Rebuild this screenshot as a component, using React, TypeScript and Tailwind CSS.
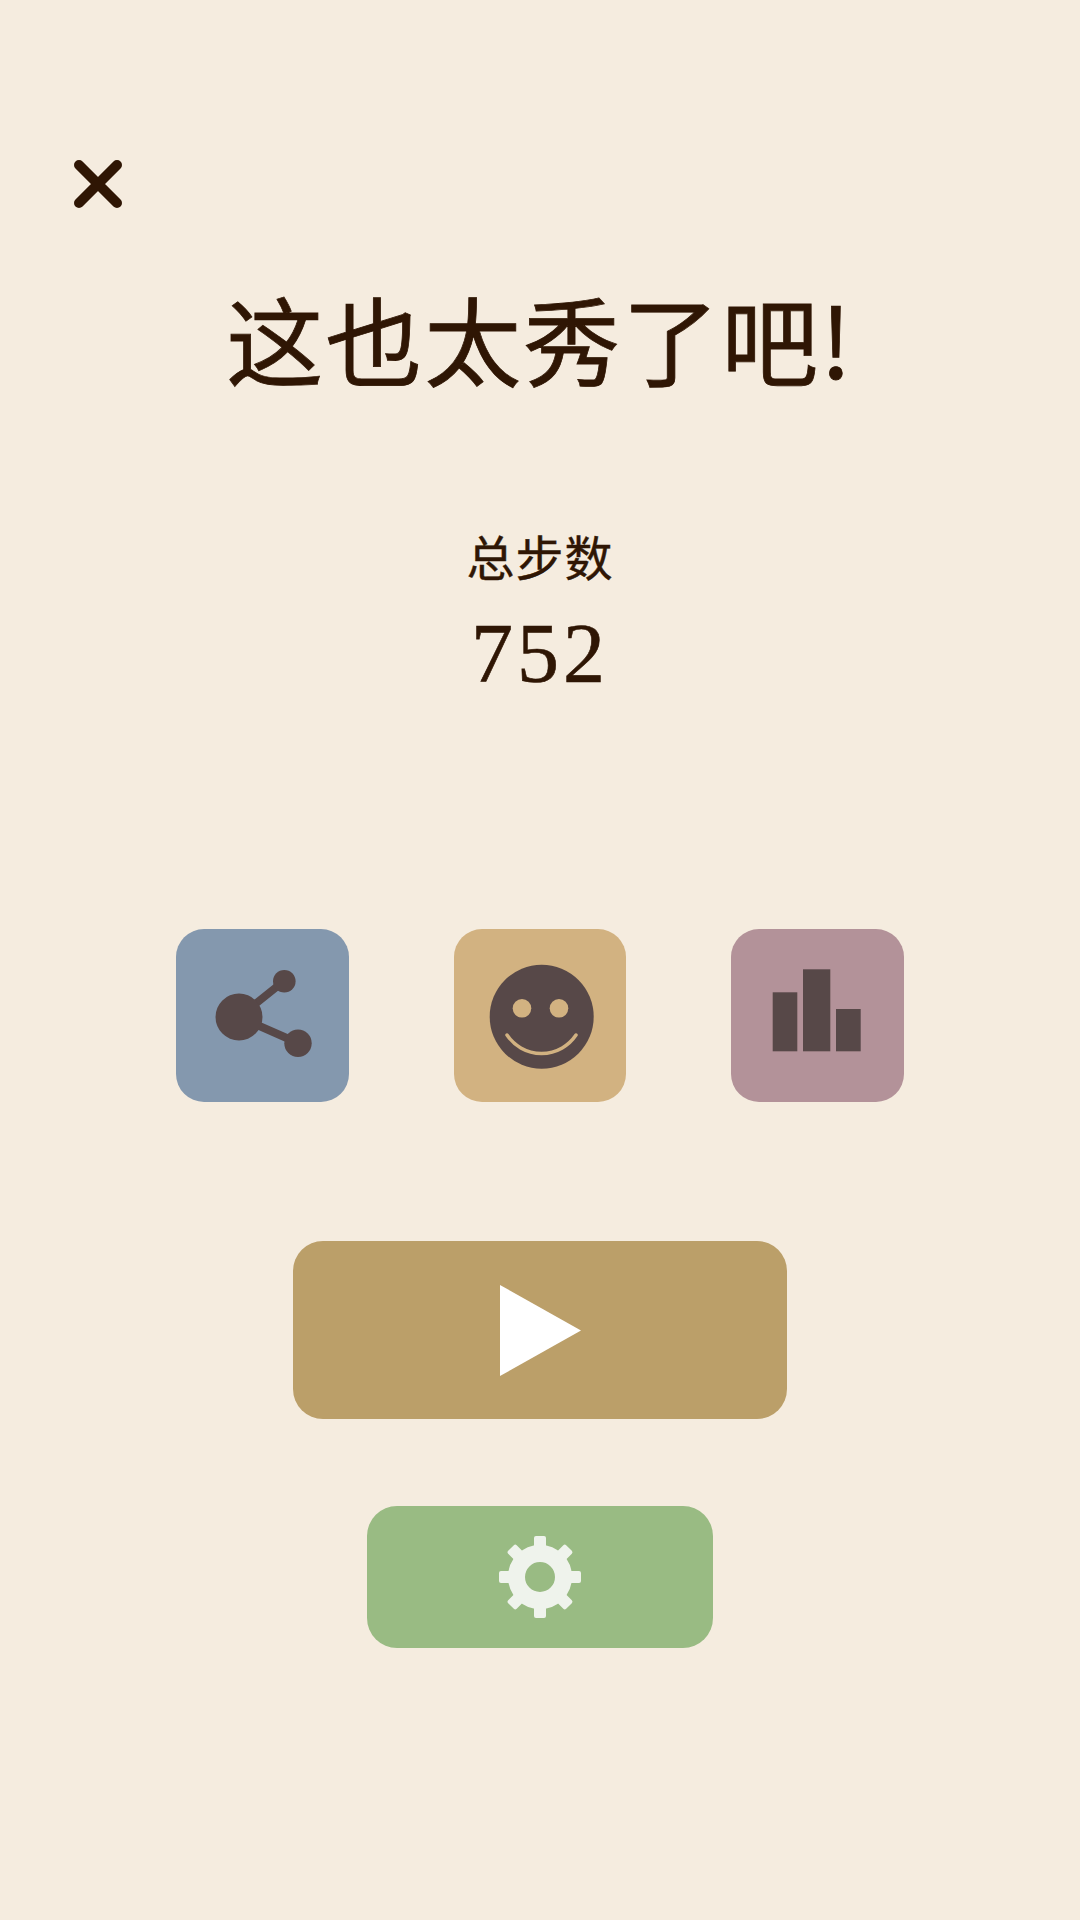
const ink = '#574848'

function CloseIcon() {
  return (
    <svg width="48" height="48" viewBox="0 0 48 48" fill="none" stroke="#2f1604" strokeWidth="10" strokeLinecap="round">
      <path d="M5 5 L43 43 M43 5 L5 43" />
    </svg>
  )
}

function ShareIcon() {
  return (
    <svg width="173" height="173" viewBox="0 0 173 173" fill={ink}>
      <path d="M63 88 L108 52 M63 88 L122 114" stroke={ink} strokeWidth="8" />
      <circle cx="63" cy="88" r="23.5" />
      <circle cx="108.3" cy="52.3" r="11.3" />
      <circle cx="122" cy="114.3" r="13.7" />
    </svg>
  )
}

function SmileIcon() {
  return (
    <svg width="172" height="173" viewBox="0 0 172 173">
      <circle cx="87.7" cy="87.7" r="52" fill={ink} />
      <circle cx="68" cy="79.3" r="9.3" fill="#d2b281" />
      <circle cx="105" cy="79.3" r="9.3" fill="#d2b281" />
      <path d="M53 106 A41.5 41.5 0 0 0 122 106" fill="none" stroke="#d2b281" strokeWidth="3.5" strokeLinecap="round" />
    </svg>
  )
}

function ChartIcon() {
  return (
    <svg width="173" height="173" viewBox="0 0 173 173" fill={ink}>
      <rect x="41.7" y="63.3" width="24.6" height="59" />
      <rect x="72" y="40.3" width="27.3" height="82" />
      <rect x="105" y="80" width="24.7" height="42.3" />
    </svg>
  )
}

function PlayIcon() {
  return (
    <svg width="81" height="91" viewBox="0 0 81 91" fill="#ffffff">
      <polygon points="0,0 81,45.5 0,91" />
    </svg>
  )
}

function GearIcon() {
  return (
    <svg width="82" height="82" viewBox="0 0 82 82" fill="#eff3ec">
      <circle cx="41" cy="41" r="23.5" fill="none" stroke="#eff3ec" strokeWidth="17" />
      {[0, 45, 90, 135, 180, 225, 270, 315].map((deg) => (
        <rect key={deg} x="35" y="0" width="12" height="16" rx="2" transform={`rotate(${deg} 41 41)`} />
      ))}
    </svg>
  )
}

export default function App() {
  return (
    <div lang="zh-CN" className="min-h-screen bg-[#f5ecdf] flex flex-col text-[#2f1604] font-['Noto_Sans_CJK_SC']">
      <div className="pt-[160px] pl-[74px]">
        <CloseIcon />
      </div>
      <p className="self-center mt-[69px] text-[97px] leading-[120px] tracking-[2px] whitespace-nowrap [-webkit-text-stroke:0.8px_#2f1604]">这也太秀了吧!</p>
      <p className="self-center mt-[126px] text-[48px] leading-[64px] tracking-[1px] [-webkit-text-stroke:0.4px_#2f1604]">总步数</p>
      <p className="self-center mt-[17px] text-[84px] leading-[100px] tracking-[4px] font-['Liberation_Serif',serif] [-webkit-text-stroke:0.6px_#2f1604]">752</p>

      <div className="self-center mt-[225px] flex gap-[105px]">
        <div className="w-[173px] h-[173px] rounded-[28px] bg-[#8498ae]">
          <ShareIcon />
        </div>
        <div className="w-[172px] h-[173px] rounded-[28px] bg-[#d2b281]">
          <SmileIcon />
        </div>
        <div className="w-[173px] h-[173px] rounded-[28px] bg-[#b39299]">
          <ChartIcon />
        </div>
      </div>

      <div className="self-center mt-[139px] w-[494px] h-[178px] rounded-[30px] bg-[#bb9f69] flex items-center justify-center">
        <PlayIcon />
      </div>
      <div className="self-center mt-[87px] w-[346px] h-[142px] rounded-[30px] bg-[#99bb83] flex items-center justify-center">
        <GearIcon />
      </div>
    </div>
  )
}
